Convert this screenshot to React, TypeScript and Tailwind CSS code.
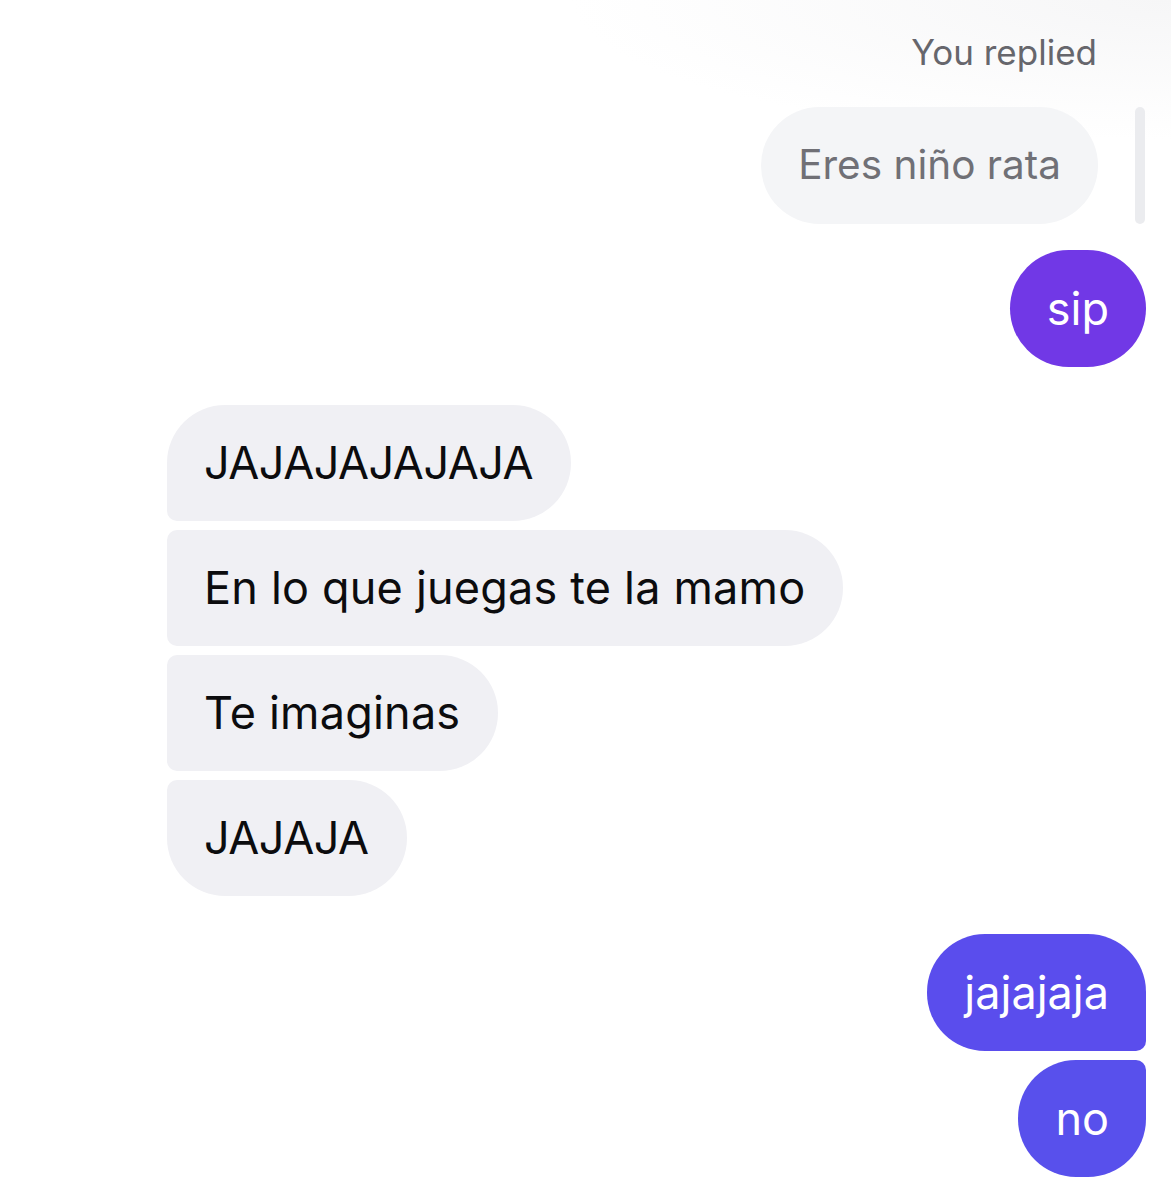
import React from 'react';

const font = { fontFamily: 'Inter, "Noto Sans", sans-serif' };

function Incoming({ text, pos, caps }: { text: string; pos: 'first' | 'mid' | 'last'; caps?: boolean }) {
  const corners =
    pos === 'first'
      ? 'rounded-tl-[58px] rounded-bl-[10px]'
      : pos === 'last'
      ? 'rounded-tl-[10px] rounded-bl-[58px]'
      : 'rounded-tl-[10px] rounded-bl-[10px]';
  return (
    <div
      className={`h-[116px] flex items-center self-start bg-[#f0f0f4] text-[#0c0c0e] text-[45px] pl-[37px] pr-[38px] rounded-tr-[58px] rounded-br-[58px] ${corners} ${caps ? 'tracking-[-0.5px]' : 'tracking-[0.2px]'}`}
    >
      {text}
    </div>
  );
}

export default function App() {
  return (
    <div className="w-[1171px] h-[1200px] overflow-hidden bg-white" style={font}>
      <div className="flex flex-col pr-[25px] pt-[30px] bg-[radial-gradient(ellipse_600px_140px_at_top_right,#f6f6f7,transparent)]">
        <div className="self-end pr-[49px] text-[35px] text-[#66666c] leading-[44px]">
          You replied
        </div>

        <div className="self-end flex items-stretch gap-[37px] mt-[33px]">
          <div className="h-[117px] flex items-center rounded-full bg-[#f4f5f7] text-[#707076] text-[40.5px] px-[37px]">
            Eres niño rata
          </div>
          <div className="w-[10px] rounded-full bg-[#ebecef] mr-[1px]" />
        </div>

        <div className="self-end mt-[26px] h-[117px] flex items-center rounded-full bg-[#7138e6] text-white text-[45px] px-[37px]">
          sip
        </div>

        <div className="flex flex-col gap-[9px] pl-[167px] mt-[38px]">
          <Incoming text="JAJAJAJAJAJA" pos="first" caps />
          <Incoming text="En lo que juegas te la mamo" pos="mid" />
          <Incoming text="Te imaginas" pos="mid" />
          <Incoming text="JAJAJA" pos="last" caps />
        </div>

        <div className="flex flex-col items-end gap-[9px] mt-[38px]">
          <div className="h-[117px] flex items-center bg-[#5a4ded] text-white text-[45px] pl-[37px] pr-[37px] rounded-tl-[58px] rounded-bl-[58px] rounded-tr-[58px] rounded-br-[10px]">
            jajajaja
          </div>
          <div className="h-[117px] flex items-center bg-[#5850ec] text-white text-[45px] pl-[37px] pr-[37px] rounded-tl-[58px] rounded-bl-[58px] rounded-tr-[10px] rounded-br-[58px]">
            no
          </div>
        </div>
      </div>
    </div>
  );
}
